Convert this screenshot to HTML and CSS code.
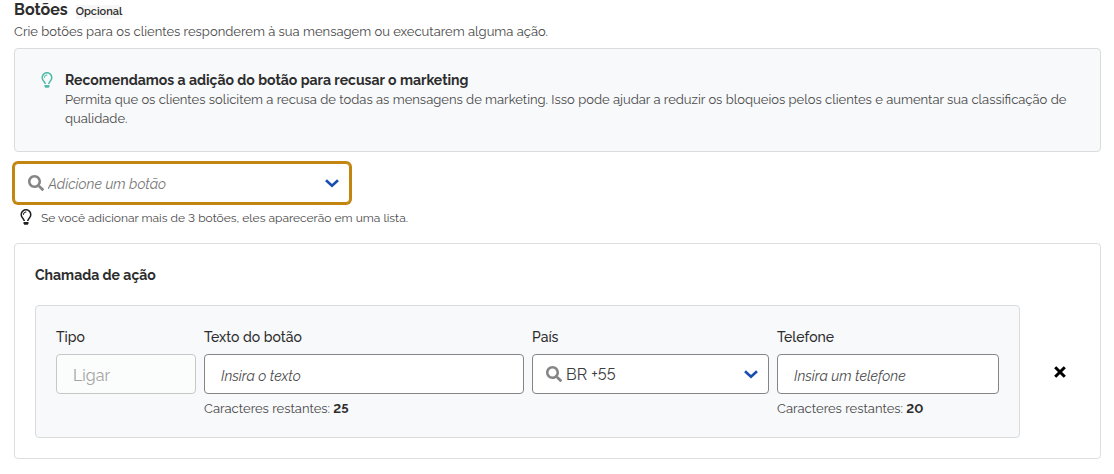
FILE: index.html
```html
<!DOCTYPE html>
<html lang="pt-BR">
<head>
    <meta charset="UTF-8">
    <meta name="viewport" content="width=device-width, initial-scale=1.0">
    <title>Botões</title>
    <link rel="stylesheet" href="styles.css">
</head>
<body>
    <svg class="sprite" aria-hidden="true">
        <symbol id="icon-bulb" viewBox="0 0 352 512">
            <path fill="currentColor" d="M176 80c-53 0-96 43-96 96 0 9 7 16 16 16s16-7 16-16c0-35 29-64 64-64 9 0 16-7 16-16s-7-16-16-16zM96 459c0 3 1 6 3 9l17 25c3 5 8 7 13 7h94c5 0 10-2 13-7l17-25c2-3 3-6 3-9v-43H96v43zM176 0C74 0 0 83 0 176c0 44 16 85 43 116 17 19 43 59 53 92h48c0-5-1-10-2-14-6-18-23-65-63-110-20-24-31-53-31-84 0-74 60-128 128-128 71 0 128 57 128 128 0 31-11 60-31 84-40 45-57 92-63 109-1 5-2 10-2 15h48c10-33 36-73 53-92 27-31 43-72 43-116C352 79 273 0 176 0z"/>
        </symbol>
        <symbol id="icon-search" viewBox="0 0 512 512">
            <path fill="currentColor" d="M505 443L405 343c-4-5-10-7-17-7h-16c28-35 44-80 44-128C416 93 323 0 208 0S0 93 0 208s93 208 208 208c48 0 93-16 128-44v16c0 7 2 13 7 17l100 100c9 9 24 9 34 0l28-28c9-10 9-25 0-34zM208 336c-71 0-128-57-128-128S137 80 208 80s128 57 128 128-57 128-128 128z"/>
        </symbol>
        <symbol id="icon-chevron" viewBox="0 0 14 9">
            <path fill="none" stroke="currentColor" stroke-width="2.6" d="M1 1.2L7 6.8l6-5.6"/>
        </symbol>
        <symbol id="icon-close" viewBox="0 0 12 12">
            <path fill="none" stroke="currentColor" stroke-width="3" d="M1.2 1.2l9.6 9.6M10.8 1.2L1.2 10.8"/>
        </symbol>
    </svg>

    <div class="container">
        <div class="heading">
            <h1>Botões</h1>
            <span class="badge">Opcional</span>
        </div>
        <p class="description">Crie botões para os clientes responderem à sua mensagem ou executarem alguma ação.</p>

        <div class="notice">
            <svg class="notice-icon"><use href="#icon-bulb"/></svg>
            <div>
                <h2>Recomendamos a adição do botão para recusar o marketing</h2>
                <p>Permita que os clientes solicitem a recusa de todas as mensagens de marketing. Isso pode ajudar a reduzir os bloqueios pelos clientes e aumentar sua classificação de qualidade.</p>
            </div>
        </div>

        <div class="combobox combobox-add">
            <svg class="search-icon"><use href="#icon-search"/></svg>
            <input type="text" role="combobox" aria-expanded="false" aria-label="Adicione um botão" placeholder="Adicione um botão">
            <button type="button" class="toggle" aria-label="Abrir lista">
                <svg class="chevron-icon"><use href="#icon-chevron"/></svg>
            </button>
        </div>
        <p class="hint">
            <svg class="hint-icon"><use href="#icon-bulb"/></svg>
            Se você adicionar mais de 3 botões, eles aparecerão em uma lista.
        </p>

        <div class="card">
            <h2>Chamada de ação</h2>
            <div class="action-row">
                <div class="action-panel">
                    <div class="field">
                        <label for="type">Tipo</label>
                        <input class="control" type="text" id="type" value="Ligar" disabled>
                    </div>
                    <div class="field">
                        <label for="button-text">Texto do botão</label>
                        <input class="control" type="text" id="button-text" placeholder="Insira o texto">
                        <p class="counter">Caracteres restantes: <strong>25</strong></p>
                    </div>
                    <div class="field">
                        <label for="country">País</label>
                        <div class="combobox">
                            <svg class="search-icon"><use href="#icon-search"/></svg>
                            <input type="text" role="combobox" aria-expanded="false" id="country" value="BR +55">
                            <button type="button" class="toggle" aria-label="Abrir lista de países">
                                <svg class="chevron-icon"><use href="#icon-chevron"/></svg>
                            </button>
                        </div>
                    </div>
                    <div class="field">
                        <label for="phone">Telefone</label>
                        <input class="control" type="tel" id="phone" placeholder="Insira um telefone">
                        <p class="counter">Caracteres restantes: <strong>20</strong></p>
                    </div>
                </div>
                <button type="button" class="remove" aria-label="Remover botão">
                    <svg class="close-icon"><use href="#icon-close"/></svg>
                </button>
            </div>
        </div>
    </div>
</body>
</html>
```
FILE: styles.css
```css
* {
    box-sizing: border-box;
}

body {
    font-family: Raleway, Lato, sans-serif;
    font-size: 13px;
    line-height: 19px;
    font-variant-numeric: lining-nums;
    margin: 0;
    background-color: #fff;
    color: #2d2d2d;
}

h1, h2, p {
    margin: 0;
}

svg {
    display: block;
    flex-shrink: 0;
}

.sprite {
    display: none;
}

.container {
    padding: 0 13px 14px 14px;
}

.heading {
    display: flex;
    align-items: baseline;
    gap: 8px;
}

.heading h1 {
    font-size: 16px;
    line-height: 20px;
    font-weight: 700;
}

.badge {
    background-color: #f7f7f7;
    font-size: 11px;
    line-height: 14px;
    font-weight: 600;
}

.description {
    margin-top: 2px;
    color: #4a4a4a;
}

.notice {
    display: flex;
    gap: 12px;
    margin-top: 7px;
    padding: 22px 24px 23px 26px;
    background-color: #f8f9fb;
    border: 1px solid #d9dbdd;
    border-radius: 4px;
}

.notice-icon {
    width: 12px;
    height: 16px;
    margin-top: 1px;
    color: #4dbba6;
}

.notice h2 {
    font-size: 14px;
    line-height: 19px;
    font-weight: 700;
}

.notice p {
    color: #4a4a4a;
}

.combobox {
    display: flex;
    align-items: center;
    height: 40px;
    padding: 0 9px 0 13px;
    background-color: #fff;
    border: 1px solid #858585;
    border-radius: 4px;
}

.combobox input {
    flex: 1;
    min-width: 0;
    padding: 1px 0 0 4px;
    border: none;
    outline: none;
    background: none;
    font-family: inherit;
    font-size: 16px;
    font-variant-numeric: inherit;
    color: #3d3d3d;
}

.combobox-add {
    max-width: 336px;
    margin-top: 11px;
    border-color: #c28510;
    box-shadow: 0 0 0 2px #c28510;
}

.combobox input::placeholder {
    font-size: 14px;
    font-style: italic;
    color: #757575;
}

.search-icon {
    width: 16px;
    height: 16px;
    color: #858585;
}

.toggle {
    padding: 0;
    border: none;
    background: none;
    color: #1a4fb0;
    cursor: pointer;
}

.chevron-icon {
    width: 16px;
    height: 9px;
}

.hint {
    display: flex;
    gap: 9px;
    margin-top: 6px;
    padding-left: 6px;
    font-size: 12px;
    color: #4a4a4a;
}

.hint-icon {
    width: 12px;
    height: 16px;
    color: #1f1f1f;
}

.card {
    margin-top: 15px;
    padding: 21px 0 20px 20px;
    border: 1px solid #dedede;
    border-radius: 4px;
}

.card h2 {
    font-size: 14px;
    line-height: 20px;
    font-weight: 700;
}

.action-row {
    display: flex;
    align-items: center;
    margin-top: 20px;
}

.action-panel {
    flex: 1;
    display: grid;
    grid-template-columns: 140fr 320fr 237fr 222fr;
    gap: 8px;
    padding: 21px 20px 19px;
    background-color: #f8f9fb;
    border: 1px solid #d9dbdd;
    border-radius: 4px;
}

.field {
    min-width: 0;
}

.field label {
    display: block;
    margin-bottom: 7px;
    font-size: 14px;
    line-height: 20px;
    font-weight: 500;
}

.control {
    display: block;
    width: 100%;
    height: 40px;
    padding: 2px 16px 0;
    border: 1px solid #858585;
    border-radius: 4px;
    background-color: #fff;
    font-family: inherit;
    font-size: 16px;
    font-variant-numeric: inherit;
    color: #3d3d3d;
}

.control::placeholder {
    font-size: 14px;
    font-style: italic;
    color: #4a4a4a;
}

.control:disabled {
    border-color: #c6c8c8;
    background-color: #fbfcfc;
    color: #a3a3a3;
}

.counter {
    margin-top: 5px;
    color: #4a4a4a;
}

.counter strong {
    color: #2d2d2d;
}

.remove {
    display: flex;
    justify-content: center;
    width: 80px;
    padding: 8px 0;
    border: none;
    background: none;
    color: #000;
    cursor: pointer;
}

.close-icon {
    width: 12px;
    height: 12px;
}
```
